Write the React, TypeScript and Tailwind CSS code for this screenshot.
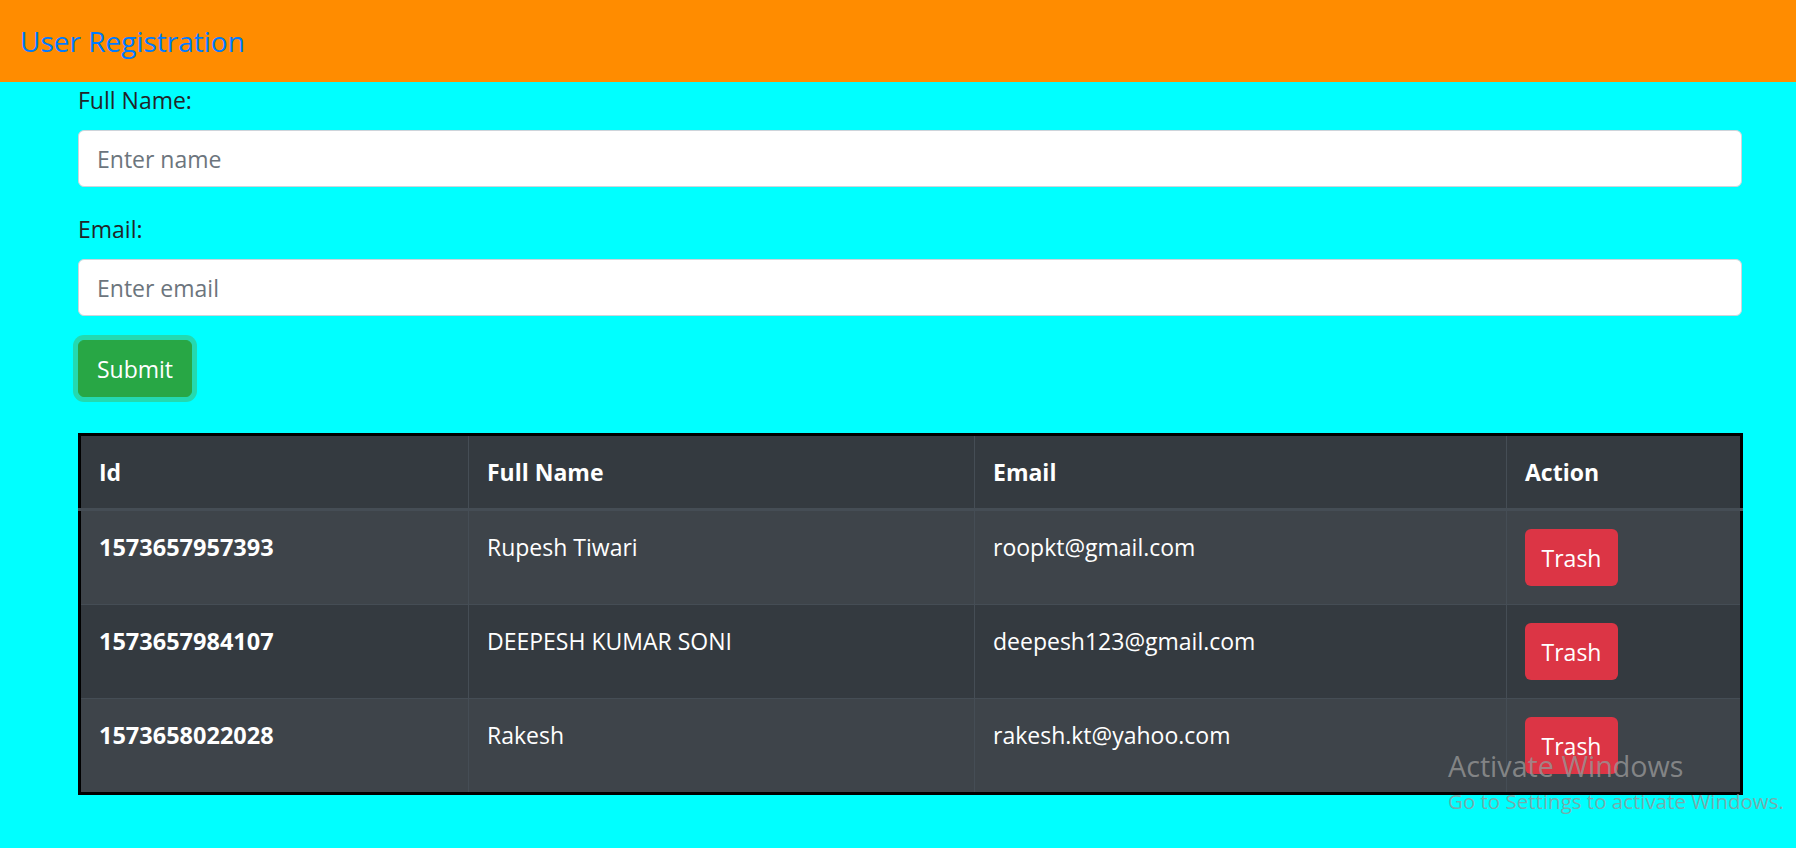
import React from "react";

const rows = [
  { id: "1573657957393", name: "Rupesh Tiwari", email: "roopkt@gmail.com" },
  { id: "1573657984107", name: "DEEPESH KUMAR SONI", email: "deepesh123@gmail.com" },
  { id: "1573658022028", name: "Rakesh", email: "rakesh.kt@yahoo.com" },
];

export default function App() {
  return (
    <div
      className="relative min-h-[848px] w-[1796px] bg-[#00ffff] text-[23px] leading-[36px] text-[#212529]"
      style={{ fontFamily: '"Open Sans", "Noto Sans", sans-serif' }}
    >
      <header className="flex h-[82px] items-center bg-[#ff8c00] pl-[20px]">
        <span className="text-[28px] leading-[40px] text-[#007bff]">User Registration</span>
      </header>

      <div className="ml-[78px] w-[1664px]">
        <form>
          <div className="mb-[24px]">
            <label className="mb-[12px] block">Full Name:</label>
            <input
              className="block h-[57px] w-full rounded-[6px] border-[1.5px] border-[#ced4da] bg-white px-[18px] text-[23px] text-[#495057] placeholder:text-[#6c757d] outline-none"
              placeholder="Enter name"
            />
          </div>
          <div className="mb-[24px]">
            <label className="mb-[12px] block">Email:</label>
            <input
              className="block h-[57px] w-full rounded-[6px] border-[1.5px] border-[#ced4da] bg-white px-[18px] text-[23px] text-[#495057] placeholder:text-[#6c757d] outline-none"
              placeholder="Enter email"
            />
          </div>
          <button
            type="button"
            className="h-[57px] w-[114px] rounded-[6px] border-[1.5px] border-[#28a745] bg-[#28a745] text-[23px] text-white shadow-[0_0_0_5px_rgba(72,180,97,0.5)]"
          >
            Submit
          </button>
        </form>

        <table className="mt-[36px] w-full table-fixed border-collapse border-[3px] border-black text-white">
          <colgroup>
            <col className="w-[389px]" />
            <col className="w-[506px]" />
            <col className="w-[532px]" />
            <col className="w-[235px]" />
          </colgroup>
          <thead>
            <tr className="bg-[#343a40]">
              <th className="border border-b-[3px] border-[#454d55] px-[18px] py-[18px] text-left align-middle font-bold">Id</th>
              <th className="border border-b-[3px] border-[#454d55] px-[18px] py-[18px] text-left align-middle font-bold">Full Name</th>
              <th className="border border-b-[3px] border-[#454d55] px-[18px] py-[18px] text-left align-middle font-bold">Email</th>
              <th className="border border-b-[3px] border-[#454d55] px-[18px] py-[18px] text-left align-middle font-bold">Action</th>
            </tr>
          </thead>
          <tbody>
            {rows.map((r, i) => (
              <tr key={r.id} className={i % 2 === 0 ? "bg-[#3e444a]" : "bg-[#343a40]"}>
                <th className="h-[93px] border border-[#454d55] px-[18px] pt-[18px] pb-[39px] text-left align-top text-[23.5px] font-bold">{r.id}</th>
                <td className="border border-[#454d55] px-[18px] pt-[18px] align-top">{r.name}</td>
                <td className="border border-[#454d55] px-[18px] pt-[18px] align-top">{r.email}</td>
                <td className="border border-[#454d55] px-[18px] py-[18px] align-top">
                  <button
                    type="button"
                    className="block h-[57px] w-[93px] rounded-[6px] bg-[#dc3545] text-[23px] text-white"
                  >
                    Trash
                  </button>
                </td>
              </tr>
            ))}
          </tbody>
        </table>
      </div>

      <div className="pointer-events-none absolute left-[1448px] top-[748px] text-[rgba(150,150,150,0.8)]">
        <div className="text-[28.7px] leading-[36px]">Activate Windows</div>
        <div className="mt-[4px] text-[20.5px] leading-[26px]">Go to Settings to activate Windows.</div>
      </div>
    </div>
  );
}
